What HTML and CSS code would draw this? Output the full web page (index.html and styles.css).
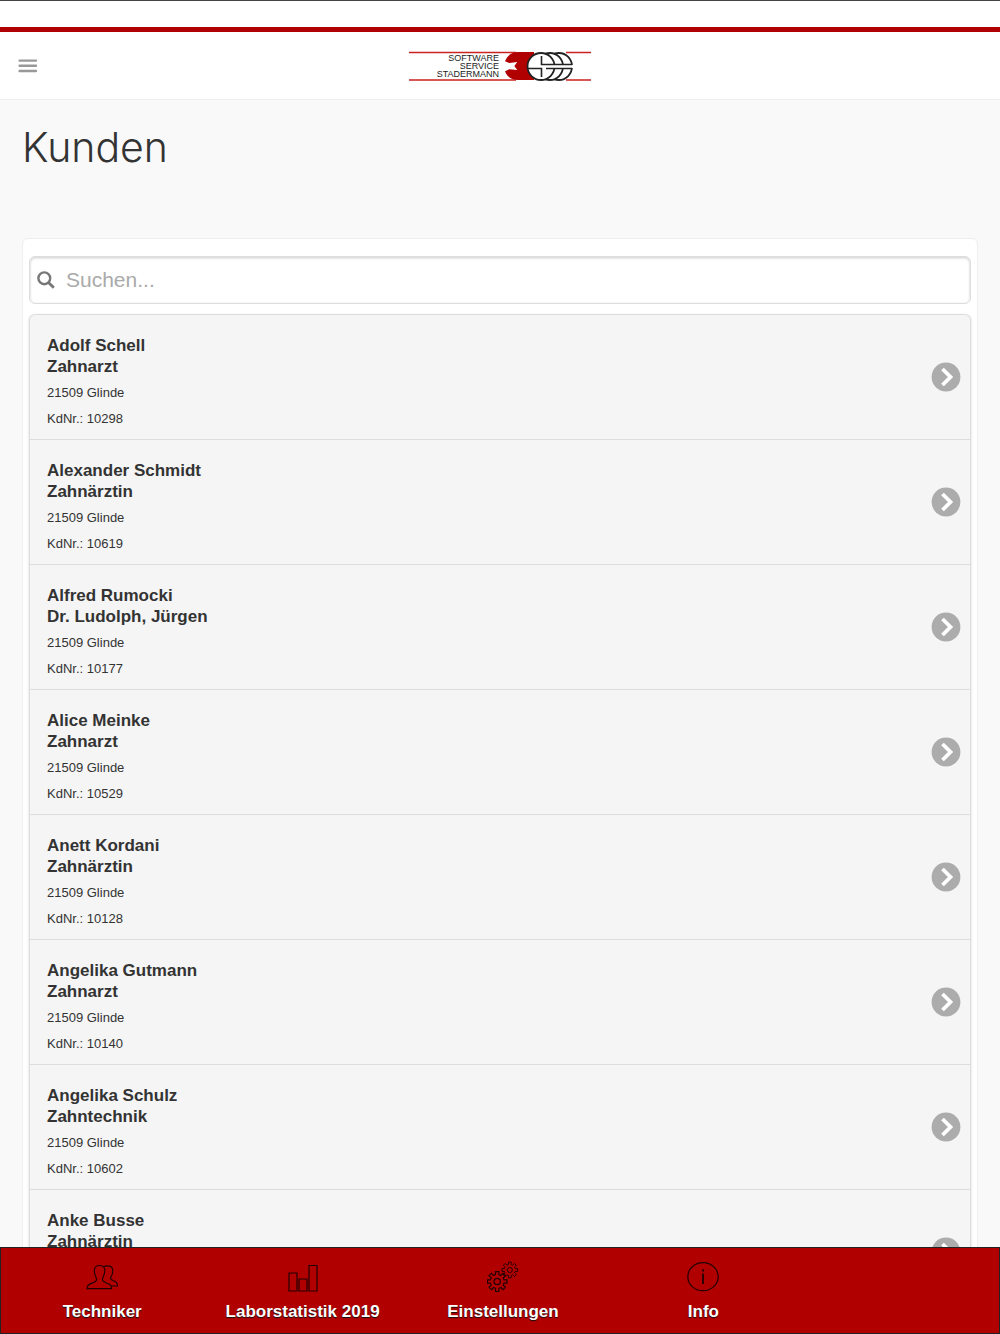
FILE: index.html
```html
<!DOCTYPE html>
<html lang="de">
<head>
    <meta charset="UTF-8">
    <meta name="viewport" content="width=device-width, initial-scale=1">
    <title>Kunden</title>
    <link rel="stylesheet" href="styles.css">
</head>
<body>
    <!-- Kopfzeile mit Menü und Logo -->
    <header class="kopf">
        <button class="menu" type="button" aria-label="Menü">
            <svg width="20" height="16" viewBox="0 0 20 16" stroke="#999" stroke-width="2.4" stroke-linecap="round">
                <path d="M1.600 2.600h16.400M1.600 7.800h16.400M1.600 13h16.400"/>
            </svg>
        </button>
        <svg class="logo" width="184" height="32" viewBox="0 0 184 32" role="img" aria-label="Software Service Stadermann">
            <path d="M1 2.500H108M158 2.500H183M1 30H108M158 30H183" stroke="#c22" stroke-width="1.400"/>
            <g class="logo-text" text-anchor="end">
                <text x="91" y="11">SOFTWARE</text>
                <text x="91" y="19">SERVICE</text>
                <text x="91" y="27">STADERMANN</text>
            </g>
            <path d="M97 11.300C99 6 103 2 110 2h16v28h-16c-7 0-11-3.500-13-8.700l4.300-2 8 .7-3-4 3-4-8 1z" fill="#b00000"/>
            <g fill="#fff" stroke="#222" stroke-width="1.800">
                <ellipse cx="151" cy="16.500" rx="13" ry="13.500"/>
                <ellipse cx="142" cy="16.500" rx="13" ry="13.500"/>
                <ellipse cx="133" cy="16.500" rx="13.500" ry="13.500"/>
            </g>
            <path d="M138 16.500H166" stroke="#fff" stroke-width="3"/>
            <path d="M133.500 6v8.500H164M120 18.500h13.500V27M138 18.500H164" fill="none" stroke="#222" stroke-width="1.600"/>
        </svg>
    </header>

    <main class="inhalt">
        <h1>Kunden</h1>

        <div class="karte">
            <!-- Suchfeld -->
            <form class="suche" role="search">
                <label for="suchfeld" aria-label="Suchen">
                    <svg width="18" height="18" viewBox="0 0 18 18" fill="none" stroke="#777" stroke-width="2.4">
                        <circle cx="7.300" cy="7.300" r="5.900"/>
                        <path d="M11.500 11.500l5.300 5.300" stroke-width="2.800"/>
                    </svg>
                </label>
                <input type="search" id="suchfeld" placeholder="Suchen...">
            </form>

            <!-- Kundenliste -->
            <ul class="liste">
                <li><a href="#10298"><div><h2>Adolf Schell<br>Zahnarzt</h2><p>21509 Glinde</p><p>KdNr.: 10298</p></div><svg class="pfeil" viewBox="0 0 30 30"><use href="#pfeil"/></svg></a></li>
                <li><a href="#10619"><div><h2>Alexander Schmidt<br>Zahnärztin</h2><p>21509 Glinde</p><p>KdNr.: 10619</p></div><svg class="pfeil" viewBox="0 0 30 30"><use href="#pfeil"/></svg></a></li>
                <li><a href="#10177"><div><h2>Alfred Rumocki<br>Dr. Ludolph, Jürgen</h2><p>21509 Glinde</p><p>KdNr.: 10177</p></div><svg class="pfeil" viewBox="0 0 30 30"><use href="#pfeil"/></svg></a></li>
                <li><a href="#10529"><div><h2>Alice Meinke<br>Zahnarzt</h2><p>21509 Glinde</p><p>KdNr.: 10529</p></div><svg class="pfeil" viewBox="0 0 30 30"><use href="#pfeil"/></svg></a></li>
                <li><a href="#10128"><div><h2>Anett Kordani<br>Zahnärztin</h2><p>21509 Glinde</p><p>KdNr.: 10128</p></div><svg class="pfeil" viewBox="0 0 30 30"><use href="#pfeil"/></svg></a></li>
                <li><a href="#10140"><div><h2>Angelika Gutmann<br>Zahnarzt</h2><p>21509 Glinde</p><p>KdNr.: 10140</p></div><svg class="pfeil" viewBox="0 0 30 30"><use href="#pfeil"/></svg></a></li>
                <li><a href="#10602"><div><h2>Angelika Schulz<br>Zahntechnik</h2><p>21509 Glinde</p><p>KdNr.: 10602</p></div><svg class="pfeil" viewBox="0 0 30 30"><use href="#pfeil"/></svg></a></li>
                <li><a href="#busse"><div><h2>Anke Busse<br>Zahnärztin</h2></div><svg class="pfeil" viewBox="0 0 30 30"><use href="#pfeil"/></svg></a></li>
            </ul>
        </div>
    </main>

    <!-- Fußleiste -->
    <nav class="fuss">
        <a href="#techniker">
            <svg viewBox="0 0 32 32">
                <path d="M1 27.700c0-4.200 3-4.700 6.500-6.200 3-1.200 3.700-2.500 2.700-4.500C9 14.500 8.200 12.500 8.300 9.500c.1-3.200 2.200-5 5.200-5s5.200 1.800 5.300 5c.1 3-.8 5-2 7.500-1 2-.3 3.300 2.700 4.500 3.500 1.500 6 2 6 6.200z"/>
                <path d="M17.500 6c1-.8 2.300-1.200 4-1.200 3.200 0 5.200 1.700 5.300 4.700.1 2.500-.6 4.500-1.900 6.500-1 1.700 0 2.600 2.100 3.500 3 1.200 4.500 2 4.500 5.500H25"/>
            </svg>
            Techniker
        </a>
        <a href="#laborstatistik">
            <svg viewBox="0 0 32 32">
                <path d="M2 12h8v18h-8zM12 18h8v12h-8zM22 4.500h8v25.500h-8z"/>
            </svg>
            Laborstatistik 2019
        </a>
        <a href="#einstellungen">
            <svg viewBox="0 0 32 32">
                <g transform="translate(10.200 20.500)"><use href="#zahnrad"/></g>
                <g transform="translate(22.800 9) scale(.8)"><use href="#zahnrad"/></g>
            </svg>
            Einstellungen
        </a>
        <a href="#info">
            <svg viewBox="0 0 32 32">
                <ellipse cx="16" cy="15.700" rx="15.200" ry="14"/>
                <path d="M16 8.300v2.200M16 12.500V23" stroke-width="1.800"/>
            </svg>
            Info
        </a>
    </nav>

    <!-- Gemeinsame Symbole -->
    <svg class="symbole" width="0" height="0">
        <defs>
            <g id="pfeil">
                <circle cx="15" cy="15" r="14.400" fill="#acacac"/>
                <path d="M11.500 7l8 8-8 8" fill="none" stroke="#fff" stroke-width="3.800"/>
            </g>
            <g id="zahnrad">
                <path d="M6.800-1.700L9.800-1.700 9.800 1.700 6.800 1.700 6 3.600 8.200 5.800 5.800 8.200 3.600 6 1.700 6.800 1.700 9.800-1.700 9.800-1.700 6.800-3.600 6-5.800 8.200-8.200 5.800-6 3.600-6.800 1.700-9.800 1.700-9.800-1.700-6.800-1.700-6-3.600-8.200-5.800-5.800-8.200-3.600-6-1.700-6.800-1.700-9.800 1.700-9.800 1.700-6.800 3.600-6 5.800-8.200 8.200-5.800 6-3.600z"/>
                <circle r="3.200"/>
            </g>
        </defs>
    </svg>
</body>
</html>
```
FILE: styles.css
```css
* {
    box-sizing: border-box;
}

body {
    font-family: "Liberation Sans", Arial, sans-serif;
    color: #333;
    background-color: #f9f9f9;
    margin: 0;
    height: 100vh;
    display: flex;
    flex-direction: column;
    border-top: 1px solid #444;
}

.kopf {
    flex: none;
    display: grid;
    grid-template-columns: 1fr auto 1fr;
    align-items: center;
    height: 73px;
    margin-top: 26px;
    padding: 0 18px;
    background-color: #fff;
    border-top: 5px solid #b00000;
    border-bottom: 1px solid #eee;
    box-shadow: 0 -26px 0 #fff;
}

.menu {
    justify-self: start;
    padding: 0;
    border: none;
    background: none;
    cursor: pointer;
}

.menu svg, .logo {
    display: block;
}

.logo-text {
    font-size: 9px;
    fill: #222;
}

.inhalt {
    flex: 1;
    min-height: 0;
    overflow-y: auto;
    scrollbar-width: none;
    padding: 22px;
}

h1 {
    margin: 0 0 66px;
    font-family: Inter, Roboto, sans-serif;
    font-size: 41px;
    font-weight: 300;
    line-height: 50px;
}

.karte {
    padding: 17px 6px;
    background-color: #fff;
    border: 1px solid #eee;
    border-radius: 6px;
}

.suche {
    display: flex;
    align-items: center;
    height: 48px;
    margin-bottom: 10px;
    padding-left: 7px;
    border: 1px solid #ddd;
    border-radius: 6px;
    box-shadow: inset 0 1px 3px rgba(0, 0, 0, 0.2);
}

.suche label svg {
    display: block;
}

.suche input {
    flex: 1;
    min-width: 0;
    padding: 0 11px;
    border: none;
    outline: none;
    background: none;
    font-family: inherit;
    font-size: 21px;
    color: #333;
}

.suche input::placeholder {
    color: #aaa;
}

.liste {
    list-style: none;
    margin: 0;
    padding: 0;
    background-color: #f5f5f5;
    border: 1px solid #ddd;
    border-top: none;
    border-radius: 6px;
    box-shadow: 0 1px 3px rgba(0, 0, 0, 0.15);
}

.liste li {
    border-top: 1px solid #ddd;
}

.liste li:first-child {
    border-radius: 6px 6px 0 0;
}

.liste a {
    display: flex;
    align-items: center;
    justify-content: space-between;
    padding: 0 9px 0 17px;
    color: #333;
    text-decoration: none;
}

.liste div {
    min-height: 124px;
    padding: 20px 0 12px;
}

.liste h2 {
    margin: 0;
    font-size: 17px;
    line-height: 21px;
}

.liste p {
    margin: 7px 0 0;
    font-size: 13px;
    line-height: 17px;
}

.liste p + p {
    margin-top: 9px;
}

.pfeil {
    flex: none;
    width: 30px;
    height: 30px;
}

.fuss {
    flex: none;
    display: grid;
    grid-template-columns: repeat(4, 20.1%);
    padding: 13px 0 11px 1px;
    background-color: #b00000;
    border: 1px solid #222;
}

.fuss a {
    display: flex;
    flex-direction: column;
    align-items: center;
    gap: 9px;
    color: #fff;
    font-size: 17px;
    font-weight: bold;
    line-height: 20px;
    text-decoration: none;
    text-shadow: 0 1px 1px #111;
}

.fuss svg {
    width: 32px;
    height: 32px;
    fill: none;
    stroke: #200;
    stroke-width: 1.2;
}

.symbole {
    position: absolute;
}
```
